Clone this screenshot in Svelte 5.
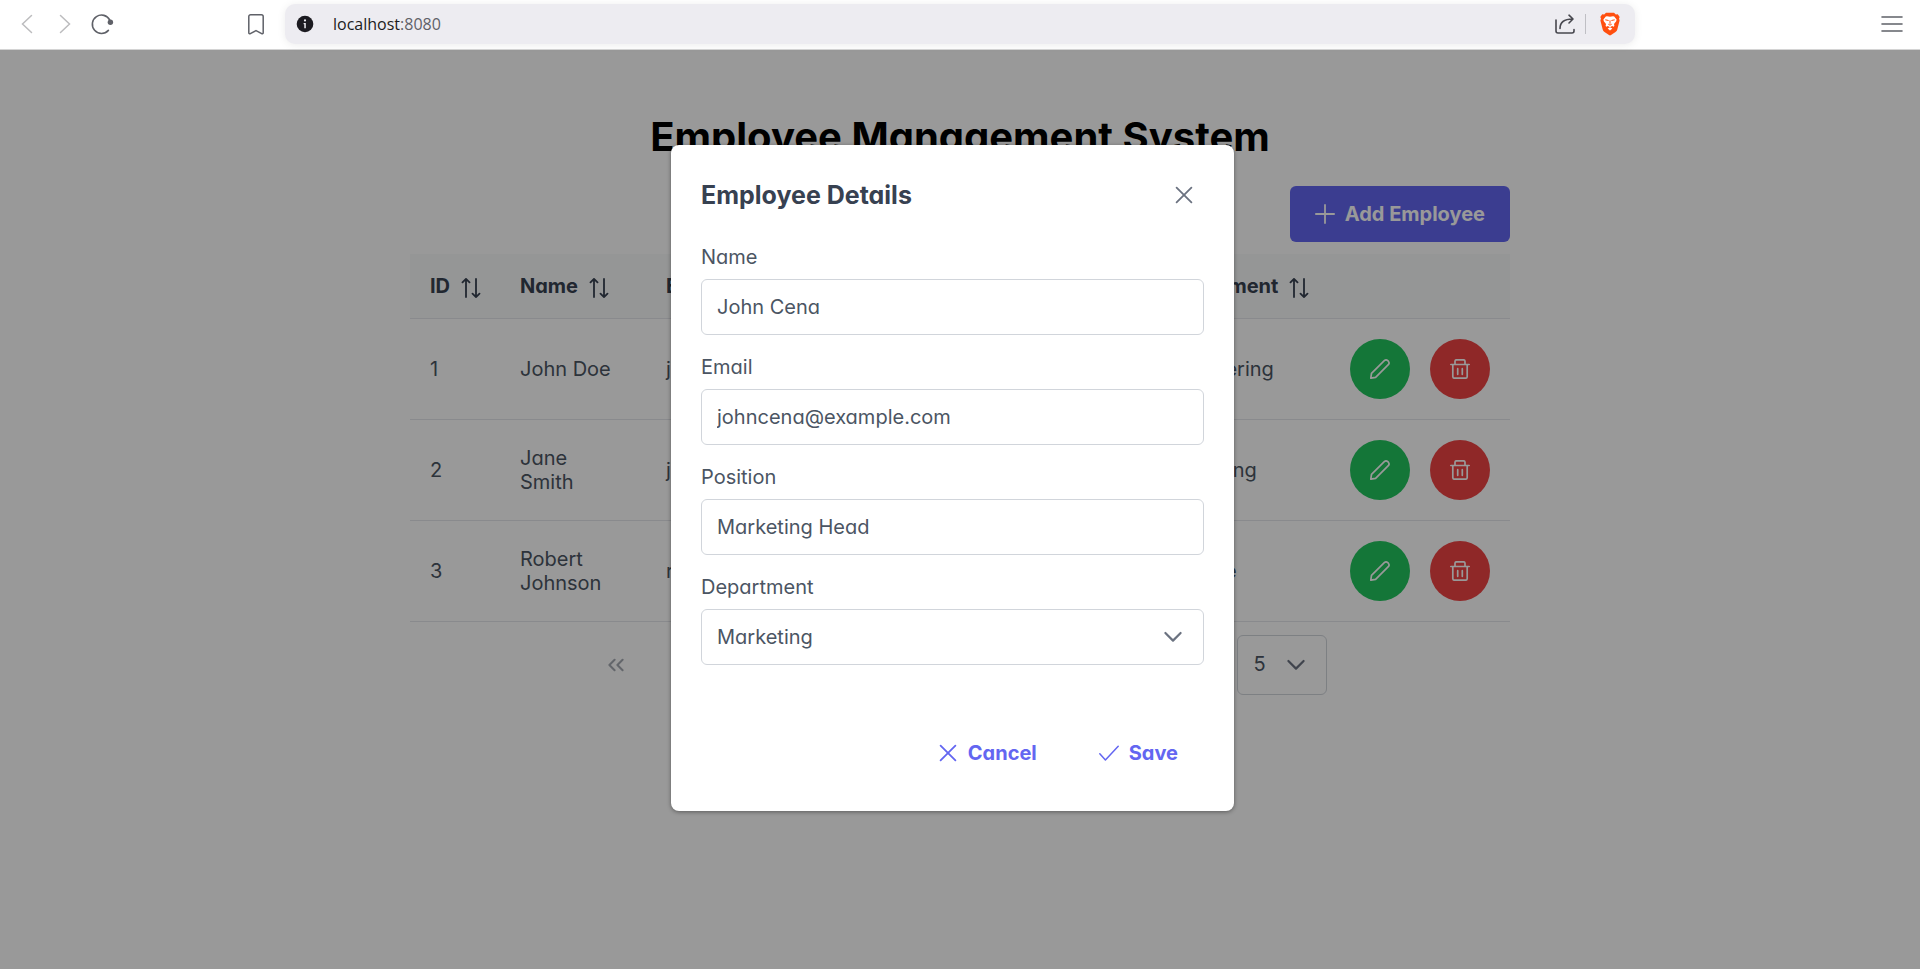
<script>
  const employees = [
    { id: 1, name: 'John Doe', email: 'john@example.com', position: 'Developer', department: 'Engineering' },
    { id: 2, name: 'Jane Smith', email: 'jane@example.com', position: 'Manager', department: 'Marketing' },
    { id: 3, name: 'Robert Johnson', email: 'robert@example.com', position: 'Analyst', department: 'Finance' }
  ];
  const columns = ['ID', 'Name', 'Email', 'Position', 'Department'];
  const departments = ['Engineering', 'Marketing', 'Finance'];

  let name = $state('John Cena');
  let email = $state('johncena@example.com');
  let position = $state('Marketing Head');
  let department = $state('Marketing');
</script>

{#snippet times()}
  <svg class="icon" viewBox="0 0 20 20" fill="none" stroke="currentColor" stroke-linecap="round" aria-hidden="true">
    <path d="M2.600 2.600 17.400 17.400M17.400 2.600 2.600 17.400" stroke-width="1.800" />
  </svg>
{/snippet}

{#snippet chevron()}
  <svg class="icon" viewBox="0 0 20 20" fill="none" stroke="currentColor" stroke-width="2.200" stroke-linecap="round" stroke-linejoin="round" aria-hidden="true">
    <path d="M2.400 6 10 13.600 17.600 6" />
  </svg>
{/snippet}

{#snippet doubleLeft()}
  <svg class="icon" viewBox="0 0 20 20" fill="none" stroke="currentColor" stroke-width="2" stroke-linecap="round" stroke-linejoin="round" aria-hidden="true">
    <path d="M8.600 4.800 3.400 10 8.600 15.200M16.600 4.800 11.400 10 16.600 15.200" />
  </svg>
{/snippet}

<div class="window">
  <header class="toolbar">
    <button class="tool dim" aria-label="Back">
      <svg width="24" height="24" viewBox="0 0 24 24" fill="none" stroke="currentColor" stroke-width="1.5" stroke-linecap="round"><path d="M15.500 3.5 6.500 12l9 8.5" /></svg>
    </button>
    <button class="tool dim" aria-label="Forward">
      <svg width="24" height="24" viewBox="0 0 24 24" fill="none" stroke="currentColor" stroke-width="1.5" stroke-linecap="round"><path d="M7.5 3.5 16.5 12l-9 8.5" /></svg>
    </button>
    <button class="tool" aria-label="Reload">
      <svg width="24" height="24" viewBox="0 0 24 24" fill="none" stroke="currentColor" stroke-width="1.6" stroke-linecap="round"><path d="M19.8 8.2A9.2 9.2 0 1 0 18.4 18.4" /><circle cx="20.4" cy="10.2" r="2.7" fill="currentColor" stroke="none" /></svg>
    </button>
    <button class="tool bookmark" aria-label="Bookmark this page">
      <svg width="24" height="24" viewBox="0 0 24 24" fill="none" stroke="currentColor" stroke-width="1.5" stroke-linejoin="round"><path d="M6.6 2.8h10.8c1 0 1.8.8 1.8 1.8v16.2c0 .8-.8 1.3-1.5.8L12 18.6l-5.7 3c-.7.5-1.5 0-1.5-.8V4.6c0-1 .8-1.8 1.8-1.8Z" /></svg>
    </button>
    <div class="address">
      <svg width="18" height="18" viewBox="0 0 18 18" aria-hidden="true"><circle cx="9" cy="9" r="8.3" fill="#1c1b21" /><circle cx="9" cy="5.4" r="1.1" fill="#edecf1" /><path d="M7.6 8h2.2v5.2H8.3V9.2h-.7Z" fill="#edecf1" /></svg>
      <span class="url">localhost<span class="port">:8080</span></span>
      <button class="tool share" aria-label="Share">
        <svg width="24" height="24" viewBox="0 0 24 24" fill="none" stroke="currentColor" stroke-width="1.6" stroke-linecap="round" stroke-linejoin="round"><path d="M3 8v11c0 1.4.6 2 2 2h14c1.400 0 2-.6 2-2v-1.500" /><path d="M7 16.500C7 11 10 7 19.500 7M16 3.200 20 7l-4 4" /></svg>
      </button>
      <span class="divider"></span>
      <button class="tool" aria-label="Brave Shields">
        <svg width="20" height="24" viewBox="0 0 20 24"><path d="M6 .8h8l1.800 1.700 2-.2 1.900 2.600-.7 1.700.6 2-2.300 9c-.3 1.100-.9 1.800-1.800 2.400L11 23c-.7.500-1.300.500-2 0l-4.500-3c-.9-.6-1.500-1.300-1.800-2.400L.4 8.600l.6-2L.3 4.900l1.900-2.600 2 .2Z" fill="#ff4f0f" /><path d="M10 4.700l3-.5 1.200.3 2.400 3.100-.4 1.600-2.200 2.900.4 1.700-.6 1-1.700-.8-1.700 1.100h-.8l-1.700-1.100-1.700.8-.6-1 .4-1.700-2.200-2.900-.4-1.600 2.400-3.100L7 4.200Z" fill="#fff" /><path d="m7.600 16.600 2.400-1.300 2.400 1.300-2.400 2Z" fill="#fff" /><path d="M5.300 7.800 8.600 8.500M14.700 7.800l-3.300.7M10 8.400v3.400M8.300 12.200l1.700 1 1.700-1" fill="none" stroke="#ff4f0f" stroke-width="1" /></svg>
      </button>
    </div>
    <button class="tool menu" aria-label="Menu">
      <svg width="24" height="24" viewBox="0 0 24 24" fill="none" stroke="currentColor" stroke-width="1.600" stroke-linecap="round"><path d="M2 5h20M2 12h20M2 19h20" /></svg>
    </button>
  </header>

  <main>
    <div class="page">
      <h1>Employee Management System</h1>
      <div class="actions">
        <button class="add">
          <svg class="icon" viewBox="0 0 20 20" fill="none" stroke="currentColor" stroke-width="1.800" stroke-linecap="round" aria-hidden="true"><path d="M10 .9v18.200M.9 10h18.200" /></svg>
          Add Employee
        </button>
      </div>

      <table>
        <colgroup>
          <col class="c-id" /><col class="c-name" /><col class="c-email" /><col /><col class="c-dept" /><col class="c-act" />
        </colgroup>
        <thead>
          <tr>
            {#each columns as column}
              <th>
                <span class="head">
                  {column}
                  <svg class="icon sort" viewBox="0 0 20 20" fill="none" stroke="currentColor" stroke-width="1.800" stroke-linecap="round" stroke-linejoin="round" aria-hidden="true"><path d="M5 19.100V1M1.500 4.400 5 .9l3.500 3.500M15 .9V19M11.500 15.600l3.500 3.500 3.500-3.500" /></svg>
                </span>
              </th>
            {/each}
            <th aria-label="Actions"></th>
          </tr>
        </thead>
        <tbody>
          {#each employees as employee}
            <tr>
              <td>{employee.id}</td>
              <td>{employee.name}</td>
              <td>{employee.email}</td>
              <td>{employee.position}</td>
              <td>{employee.department}</td>
              <td>
                <div class="row-actions">
                  <button class="round edit" aria-label="Edit {employee.name}">
                    <svg class="icon" viewBox="0 0 20 20" fill="none" stroke="currentColor" stroke-width="1.700" stroke-linejoin="round"><path d="M.8 19.200 1.500 14.300 14.300 1.700c1-.9 2.500-.9 3.500 0l.5.500c.9 1 .9 2.500 0 3.500L5.600 18.400Z" /></svg>
                  </button>
                  <button class="round delete" aria-label="Delete {employee.name}">
                    <svg class="icon" viewBox="0 0 20 20" fill="none" stroke="currentColor" stroke-width="1.700" stroke-linecap="round" stroke-linejoin="round"><path d="M.8 5.500h18.400M5 5.500V2.300C5 1.400 5.600.8 6.500.8h7c.9 0 1.500.6 1.500 1.500v3.200M2.800 5.500v12c0 1 .7 1.700 1.700 1.700h11c1 0 1.700-.7 1.700-1.700v-12M7.700 9.700v5.600M12.300 9.700v5.600" /></svg>
                  </button>
                </div>
              </td>
            </tr>
          {/each}
        </tbody>
      </table>

      <nav class="paginator" aria-label="Pagination">
        <button class="page-button" aria-label="First page">{@render doubleLeft()}</button>
        <span class="select-box rows">
          <select aria-label="Rows per page"><option>5</option><option>10</option><option>25</option></select>
          {@render chevron()}
        </span>
      </nav>
    </div>

    <div class="mask">
      <form class="dialog" role="dialog" aria-labelledby="dialog-title">
        <div class="dialog-head">
          <h2 id="dialog-title">Employee Details</h2>
          <button type="button" class="close" aria-label="Close">{@render times()}</button>
        </div>
        <div class="fields">
          <div class="field">
            <label for="name">Name</label>
            <input id="name" type="text" bind:value={name} />
          </div>
          <div class="field">
            <label for="email">Email</label>
            <input id="email" type="text" bind:value={email} />
          </div>
          <div class="field">
            <label for="position">Position</label>
            <input id="position" type="text" bind:value={position} />
          </div>
          <div class="field">
            <label for="department">Department</label>
            <span class="select-box">
              <select id="department" bind:value={department}>
                {#each departments as option}<option>{option}</option>{/each}
              </select>
              {@render chevron()}
            </span>
          </div>
        </div>
        <div class="dialog-foot">
          <button type="button" class="text-button">{@render times()}Cancel</button>
          <button type="button" class="text-button">
            <svg class="icon" viewBox="0 0 20 20" fill="none" stroke="currentColor" stroke-width="1.500" stroke-linecap="round" stroke-linejoin="round" aria-hidden="true"><path d="M.8 10.800 6.400 17 19.200 3.200" /></svg>
            Save
          </button>
        </div>
      </form>
    </div>
  </main>
</div>

<style>
  :global(body) {
    margin: 0;
    background: #fff;
  }

  .window {
    display: flex;
    flex-direction: column;
    min-height: 100vh;
    font-family: Inter, 'Open Sans', sans-serif;
    font-feature-settings: 'cv02', 'cv03', 'cv04', 'cv11';
    font-size: 20px;
    line-height: 24px;
    color: #4b5563;
  }

  button,
  input,
  select {
    font: inherit;
    font-feature-settings: inherit;
    color: inherit;
    box-sizing: border-box;
    margin: 0;
  }

  button {
    display: inline-flex;
    align-items: center;
    justify-content: center;
    border: 0;
    padding: 0;
    background: none;
    cursor: pointer;
  }

  .icon {
    width: 20px;
    height: 20px;
    flex: none;
  }

  .toolbar {
    display: flex;
    align-items: center;
    box-sizing: border-box;
    height: 50px;
    padding: 4px 16px 5px;
    border-bottom: 1px solid #d4d4d4;
  }

  .tool {
    flex: none;
    color: #5f6168;
  }

  .tool.dim {
    color: #bcbcbe;
    margin-right: 13px;
  }

  .tool.bookmark {
    margin: 0 17px 0 130px;
  }

  .address {
    flex: 0 1 1350px;
    display: flex;
    align-items: center;
    box-sizing: border-box;
    height: 40px;
    padding: 0 15px 0 11px;
    border-radius: 10px;
    background: #edecf1;
    box-shadow: 0 1px 8px rgba(0, 0, 0, 0.08);
  }

  .url {
    flex: 1;
    margin-left: 19px;
    font-family: 'Open Sans', sans-serif;
    font-size: 16px;
    color: #1c1b21;
  }

  .port {
    color: #5f6168;
  }

  .tool.share {
    color: #47474e;
  }

  .divider {
    width: 1px;
    height: 20px;
    margin: 0 14px 0 8px;
    background: #bfbfc4;
  }

  .menu {
    margin-left: auto;
  }

  main {
    position: relative;
    flex: 1;
  }

  .page {
    max-width: 1100px;
    margin: 0 auto;
    padding-top: 63px;
  }

  h1 {
    margin: 0 0 25px;
    text-align: center;
    font-size: 40px;
    line-height: 48px;
    font-weight: 700;
    color: #000;
  }

  .actions {
    display: flex;
    justify-content: flex-end;
    margin-bottom: 12px;
  }

  .add {
    gap: 10px;
    height: 56px;
    padding: 0 25px;
    border-radius: 6px;
    background: #6366f1;
    color: #fff;
    font-weight: 700;
  }

  table {
    width: 100%;
    table-layout: fixed;
    border-collapse: separate;
    border-spacing: 0;
  }

  .c-id {
    width: 90px;
  }

  .c-name {
    width: 146px;
  }

  .c-email {
    width: 260px;
  }

  .c-dept {
    width: 189px;
  }

  .c-act {
    width: 180px;
  }

  th,
  td {
    padding: 20px;
    text-align: left;
    border-bottom: 1px solid #e5e7eb;
  }

  th {
    background: #f9fafb;
    color: #374151;
    font-weight: 700;
  }

  td {
    height: 60px;
  }

  .head {
    display: flex;
    align-items: center;
    height: 24px;
    gap: 11px;
  }

  .sort {
    margin-top: 3px;
  }

  .row-actions {
    display: flex;
    gap: 20px;
  }

  .round {
    width: 60px;
    height: 60px;
    border-radius: 50%;
    color: #fff;
  }

  .edit {
    background: #22c55e;
  }

  .delete {
    background: #ef4444;
  }

  .paginator {
    display: flex;
    align-items: center;
    justify-content: space-between;
    max-width: 741px;
    margin: 0 auto;
    padding: 13px 8px 13px 0;
  }

  .page-button {
    width: 60px;
    height: 60px;
    color: #6b7280;
    opacity: 0.6;
  }

  .select-box {
    display: grid;
    align-items: center;
  }

  .select-box > :global(*) {
    grid-area: 1 / 1;
  }

  .select-box > :global(.icon) {
    justify-self: end;
    margin-right: 21px;
    color: #6b7280;
    pointer-events: none;
  }

  input,
  select {
    width: 100%;
    height: 56px;
    padding: 0 15px;
    border: 1px solid #d1d5db;
    border-radius: 6px;
    background: #fff;
    appearance: none;
    outline: 0;
  }

  .rows {
    width: 90px;
  }

  .rows select {
    height: 60px;
    padding: 0 16px 2px;
  }

  .mask {
    position: absolute;
    inset: 0;
    display: flex;
    justify-content: center;
    align-items: flex-start;
    padding: 95px 15px 0 0;
    background: rgba(0, 0, 0, 0.4);
  }

  .dialog {
    box-sizing: border-box;
    width: 563px;
    padding: 30px;
    border-radius: 8px;
    background: #fff;
    box-shadow: 0 1px 4px rgba(0, 0, 0, 0.4);
  }

  .dialog-head {
    display: flex;
    align-items: center;
    justify-content: space-between;
    margin-bottom: 30px;
  }

  h2 {
    margin: 0;
    font-size: 25px;
    line-height: 30px;
    font-weight: 700;
    color: #374151;
  }

  .close {
    width: 40px;
    height: 40px;
    color: #6b7280;
  }

  .fields {
    display: grid;
    gap: 20px;
  }

  .field {
    display: grid;
    gap: 10px;
  }

  .dialog-foot {
    display: flex;
    justify-content: flex-end;
    gap: 10px;
    margin-top: 60px;
  }

  .text-button {
    gap: 10px;
    height: 56px;
    padding: 0 26px;
    color: #6366f1;
    font-weight: 700;
  }
</style>
